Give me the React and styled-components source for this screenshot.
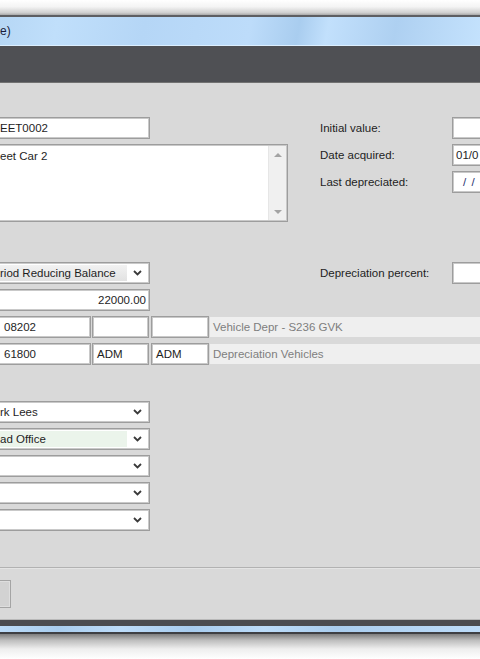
import React from "react";
import styled, { createGlobalStyle } from "styled-components";

const GlobalStyle = createGlobalStyle`
  html, body {
    margin: 0;
    padding: 0;
    background: #ffffff;
    overflow: hidden;
  }
  body {
    font-family: "Liberation Sans", Arial, sans-serif;
    font-size: 11.5px;
    color: #1e1e1e;
  }
`;

const Page = styled.div`
  width: 480px;
  height: 659px;
  display: flex;
  flex-direction: column;
  overflow: hidden;
`;

const TopShade = styled.div`
  height: 15px;
  flex: none;
  background: linear-gradient(#ffffff 0%, #f4f4f4 45%, #cfcfcf 85%, #a8a8a8 100%);
`;

const TitleBar = styled.div`
  height: 28px;
  flex: none;
  display: flex;
  align-items: center;
  border-top: 2px solid #5d5e62;
  border-bottom: 1px solid #dcefff;
  background: linear-gradient(
    100deg,
    #b6d7f5 0%,
    #c0dffb 12%,
    #b5d6f6 30%,
    #bddcfa 52%,
    #a9cdef 62%,
    #c2e0fc 68%,
    #aed0f1 82%,
    #c4e2fd 100%
  );
  font-size: 12px;
  color: #1c1d3a;
`;

const Toolbar = styled.div`
  height: 36px;
  flex: none;
  background: #4f5054;
  border-bottom: 1px solid #727272;
`;

const Content = styled.div`
  flex: 1;
  background: #d9d9d9;
  display: flex;
  flex-direction: column;
`;

const Form = styled.div`
  padding-top: 34px;
  display: flex;
  flex-direction: column;
  margin-left: -6px;
`;

const Row = styled.div`
  display: flex;
  align-items: flex-start;
  gap: ${(p) => p.$gap || 0}px;
  margin-top: ${(p) => p.$top || 0}px;
`;

const Stack = styled.div`
  display: flex;
  flex-direction: column;
  gap: 5px;
  margin-top: ${(p) => p.$top || 0}px;
`;

const Field = styled.div`
  box-sizing: border-box;
  height: 22px;
  width: ${(p) => p.$w}px;
  flex: none;
  background: #ffffff;
  border: 1px solid #9d9d9d;
  box-shadow: inset 0 0 0 1px #c9c9c9;
  display: flex;
  align-items: center;
  justify-content: ${(p) => (p.$right ? "flex-end" : "flex-start")};
  padding: 0 ${(p) => (p.$right ? 3 : 0)}px 0 ${(p) => p.$pad ?? 5}px;
  white-space: nowrap;
  overflow: hidden;
  color: ${(p) => p.$color || "#1e1e1e"};
`;

const TextArea = styled.div`
  box-sizing: border-box;
  width: 294px;
  height: 78px;
  background: #ffffff;
  border: 1px solid #9d9d9d;
  box-shadow: inset 0 0 0 1px #c9c9c9;
  display: flex;
`;

const TextBody = styled.div`
  flex: 1;
  padding: 5px 0 0 5px;
`;

const ScrollBar = styled.div`
  width: 17px;
  margin: 1px 1px 1px 0;
  background: #f0f0f0;
  border-left: 1px solid #e6e6e6;
  display: flex;
  flex-direction: column;
  justify-content: space-between;
  align-items: center;
  padding: 7px 0 6px;
`;

const Arrow = styled.div`
  width: 0;
  height: 0;
  border-left: 4px solid transparent;
  border-right: 4px solid transparent;
  ${(p) =>
    p.$down ? "border-top: 4px solid #a3a3a3;" : "border-bottom: 4px solid #a3a3a3;"}
`;

const LabelGrid = styled.div`
  display: grid;
  grid-template-columns: 132px 30px;
  grid-auto-rows: 22px;
  row-gap: 5px;
  margin-left: ${(p) => p.$left}px;
`;

const Label = styled.div`
  display: flex;
  align-items: center;
  white-space: nowrap;
`;

const DateText = styled.span`
  color: #1f2f6e;
  letter-spacing: 1px;
`;

const SelectBox = styled.div`
  box-sizing: border-box;
  width: 156px;
  height: 22px;
  flex: none;
  border: 1px solid #9d9d9d;
  box-shadow: inset 0 0 0 1px #c9c9c9;
  background: #ffffff;
  display: flex;
  padding: 2px;
`;

const SelectValue = styled.div`
  flex: 1;
  display: flex;
  align-items: center;
  padding-left: 3px;
  white-space: nowrap;
  overflow: hidden;
  background: ${(p) =>
    p.$tint === "grey"
      ? "linear-gradient(#f2f2f2, #e2e2e2)"
      : p.$tint === "green"
      ? "#ebf4eb"
      : "#ffffff"};
`;

const SelectArrow = styled.div`
  width: 20px;
  display: flex;
  align-items: center;
  justify-content: center;
`;

const Display = styled.div`
  flex: 1;
  height: 20px;
  margin-top: 1px;
  background: #efefef;
  color: #7e7e7e;
  display: flex;
  align-items: center;
  padding-left: 3px;
  white-space: nowrap;
`;

const Footer = styled.div`
  margin-top: auto;
  height: 52px;
  border-top: 1px solid #b2b2b2;
  box-shadow: inset 0 1px 0 #e4e4e4;
  padding-top: 12px;
  box-sizing: border-box;
`;

const Button = styled.div`
  box-sizing: border-box;
  width: 60px;
  height: 28px;
  margin-left: -49px;
  background: #d2d2d2;
  border: 1px solid #a4a4a4;
  box-shadow: inset 0 0 0 1px #dedede;
`;

const FrameBottom = styled.div`
  flex: none;
  height: 6px;
  background: #4b4c50;
  border-top: 1px solid #b9b9b9;
`;

const FrameBlue = styled.div`
  flex: none;
  height: 6px;
  background: linear-gradient(
    90deg,
    #bcdcf9 0%,
    #a9cdee 12%,
    #bddcf9 25%,
    #a8ccee 40%,
    #bcdcf9 55%,
    #aacdee 70%,
    #bddcf9 100%
  );
  border-bottom: 2px solid #3e3f43;
`;

const BottomShade = styled.div`
  flex: none;
  height: 25px;
  background: linear-gradient(#7d7d7d 0%, #bdbdbd 25%, #eeeeee 60%, #ffffff 100%);
`;

const Chevron = () => (
  <svg width="9" height="6" viewBox="0 0 9 6">
    <polyline points="1,1 4.5,4.5 8,1" fill="none" stroke="#3a3a3a" strokeWidth="1.8" />
  </svg>
);

const Select = ({ value, tint }) => (
  <SelectBox>
    <SelectValue $tint={tint}>{value}</SelectValue>
    <SelectArrow>
      <Chevron />
    </SelectArrow>
  </SelectBox>
);

export default function App() {
  return (
    <Page>
      <GlobalStyle />
      <TopShade />
      <TitleBar>e)</TitleBar>
      <Toolbar />
      <Content>
        <Form>
          <Row>
            <Stack>
              <Field $w={156}>EET0002</Field>
              <TextArea>
                <TextBody>eet Car 2</TextBody>
                <ScrollBar>
                  <Arrow />
                  <Arrow $down />
                </ScrollBar>
              </TextArea>
            </Stack>
            <LabelGrid $left={32}>
              <Label>Initial value:</Label>
              <Field $w={30} />
              <Label>Date acquired:</Label>
              <Field $w={30} $pad={3}>01/0</Field>
              <Label>Last depreciated:</Label>
              <Field $w={30} $pad={10}>
                <DateText>/ /</DateText>
              </Field>
            </LabelGrid>
          </Row>

          <Row $top={40}>
            <Select value="riod Reducing Balance" tint="grey" />
            <LabelGrid $left={170}>
              <Label>Depreciation percent:</Label>
              <Field $w={30} />
            </LabelGrid>
          </Row>

          <Stack $top={5}>
            <Field $w={156} $right>22000.00</Field>
            <Row $gap={1}>
              <Field $w={97} $pad={9}>08202</Field>
              <Field $w={57} />
              <Field $w={58} $pad={1} style={{ marginLeft: 1 }} />
              <Display>Vehicle Depr - S236 GVK</Display>
            </Row>
            <Row $gap={1}>
              <Field $w={97} $pad={9}>61800</Field>
              <Field $w={57} $pad={4}>ADM</Field>
              <Field $w={58} $pad={4} style={{ marginLeft: 1 }}>ADM</Field>
              <Display>Depreciation Vehicles</Display>
            </Row>
          </Stack>

          <Stack $top={36}>
            <Select value="rk Lees" />
            <Select value="ad Office" tint="green" />
            <Select value="" />
            <Select value="" />
            <Select value="" />
          </Stack>
        </Form>
        <Footer>
          <Button />
        </Footer>
      </Content>
      <FrameBottom />
      <FrameBlue />
      <BottomShade />
    </Page>
  );
}
